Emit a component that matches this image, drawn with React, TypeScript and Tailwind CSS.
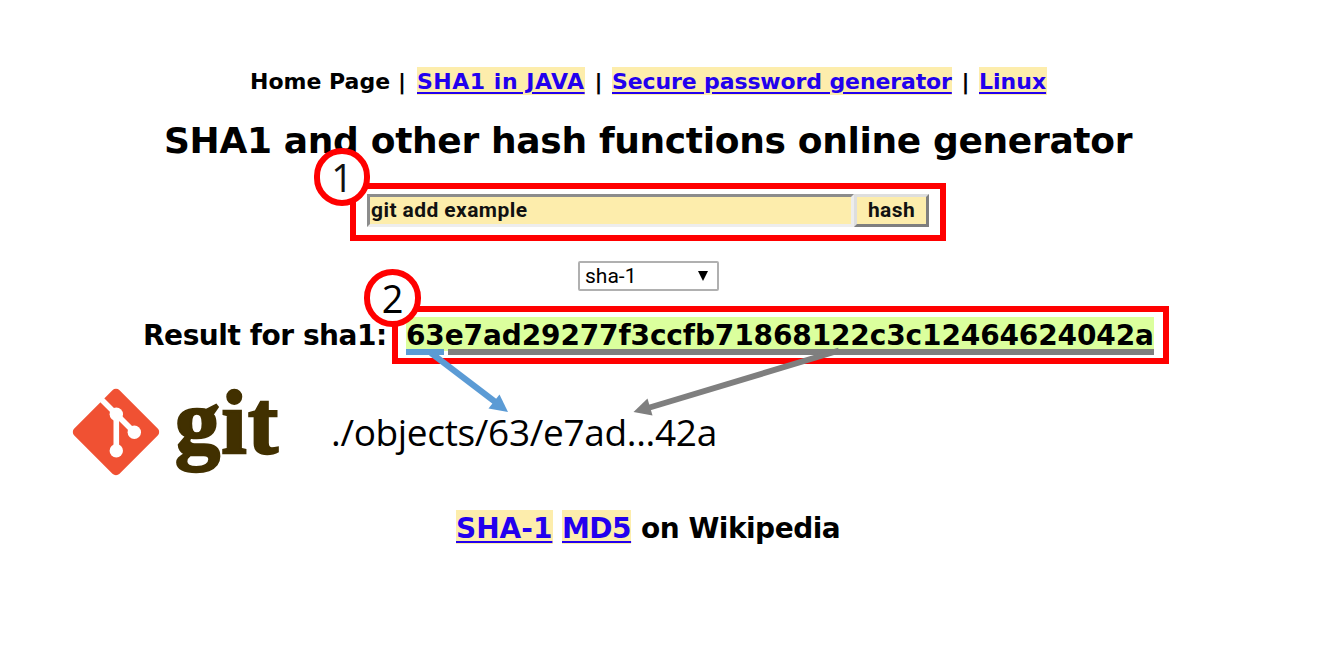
import type { ReactNode } from 'react';

function Mark({ children, className = '' }: { children: ReactNode; className?: string }) {
  return (
    <a href="#" className={`bg-[#fdedac] text-[#2200ee] underline decoration-2 underline-offset-[3px] ${className}`}>
      {children}
    </a>
  );
}

function Step({ n, className }: { n: number; className: string }) {
  return (
    <div
      className={`absolute z-10 flex h-[58px] items-center justify-center rounded-full border-6 border-[#ff0000] bg-white font-['Open_Sans','Noto_Sans',sans-serif] text-[38px] leading-none font-normal ${className}`}
    >
      {n}
    </div>
  );
}

function GitMark() {
  return (
    <svg viewBox="0 0 88 88" className="h-[88px] w-[88px] shrink-0">
      <rect x="12" y="12" width="64" height="64" rx="5" fill="#f05133" transform="rotate(45 44 44)" />
      <path d="M27 9 L62.300 44.300 M44.300 27 V63" fill="none" stroke="#fff" strokeWidth="5.6" />
      <circle cx="44.300" cy="26.300" r="6.700" fill="#fff" />
      <circle cx="62.300" cy="44.300" r="6.700" fill="#fff" />
      <circle cx="44.300" cy="62.700" r="6.700" fill="#fff" />
    </svg>
  );
}

function Arrows() {
  return (
    <svg viewBox="0 0 1326 649" className="pointer-events-none absolute top-0 left-0 z-20 h-[649px] w-[1326px]">
      <path d="M431 353 L498 404" stroke="#5b9bd5" strokeWidth="6" />
      <path d="M508 412 L488.500 408.500 L499.500 394.500 Z" fill="#5b9bd5" />
      <path d="M839 350.500 L648 408" stroke="#7f7f7f" strokeWidth="6" />
      <path d="M633.500 412 L647.500 398.500 L652.500 415.500 Z" fill="#7f7f7f" />
    </svg>
  );
}

export default function App() {
  return (
    <div className="relative h-[649px] w-[1326px] overflow-hidden bg-white font-['DejaVu_Sans',sans-serif] font-bold text-black">
      <nav className="mt-[67px] ml-[250px] flex h-[28px] items-center text-[22px] leading-[29px] whitespace-pre">
        <span className="w-[148px]">Home Page</span>
        <span className="w-[19px]">|</span>
        <Mark className="h-[28px] w-[168px] tracking-[0.52px]">SHA1 in JAVA</Mark>
        <span className="w-[27px] text-center">|</span>
        <Mark className="h-[28px] w-[340px] tracking-[-0.12px]">Secure password generator</Mark>
        <span className="w-[27px] text-center">|</span>
        <Mark className="h-[28px] w-[68px]">Linux</Mark>
      </nav>

      <h1 className="mt-[21px] ml-[164px] h-[50px] text-[36px] leading-[50px] tracking-[-0.33px] whitespace-nowrap">
        SHA1 and other hash functions online generator
      </h1>

      <form className="relative mt-[17px] ml-[350px] flex h-[58px] w-[596px] items-start border-6 border-[#ff0000] pt-[5px] pl-[11px] font-['Roboto',sans-serif] text-[21px] tracking-[0.42px] text-[#111]">
        <Step n={1} className="-top-[41px] -left-[42px] w-[56px] tracking-normal" />
        <div className="flex h-[33px] w-[487px] items-center border-[3px] border-t-[#8c8c8c] border-r-[#ededed] border-b-[#ededed] border-l-[#8c8c8c] bg-[#fdedac] pl-[1px] whitespace-nowrap">
          git add example
        </div>
        <button
          type="button"
          className="flex h-[33px] w-[75px] items-center justify-center border-[3px] border-t-[#dedede] border-r-[#7f7f7f] border-b-[#7f7f7f] border-l-[#dedede] bg-[#fdedac]"
        >
          hash
        </button>
      </form>

      <div className="mt-[20px] ml-[578px] flex h-[30px] w-[141px] items-center justify-between rounded-[2px] border-2 border-[#b0b0b0] pr-[9px] pl-[5px] font-['Roboto',sans-serif] text-[21px] font-normal">
        <span className="pt-px">sha-1</span>
        <svg viewBox="0 0 10 10" className="h-[10px] w-[10px]">
          <path d="M0 0 H10 L5 10 Z" />
        </svg>
      </div>

      <div className="mt-[15px] ml-[143px] flex h-[58px] items-center text-[28px] leading-[36px] whitespace-nowrap">
        <span className="w-[249px] pt-[2px] tracking-[-0.45px]">Result for sha1:</span>
        <div className="relative h-[58px] w-[777px] border-6 border-[#ff0000] pt-[5px] pl-[8px]">
          <Step n={2} className="-top-[43px] -left-[34px] w-[57px]" />
          <div className="h-[34px] w-[748px] bg-[#dbff9d] leading-[38px] tracking-[-0.12px]">
            63e7ad29277f3ccfb71868122c3c12464624042a
          </div>
          <div className="relative -mt-[2px] flex items-start gap-[4px]">
            <div className="h-[6px] w-[38px] bg-[#5b9bd5]" />
            <div className="h-[6px] w-[706px] bg-[#7f7f7f]" />
          </div>
        </div>
      </div>

      <section className="mt-[24px] ml-[72px] flex h-[88px] items-center">
        <GitMark />
        <span className="mb-[18px] ml-[15px] w-[156px] font-['Liberation_Serif',serif] text-[90px] leading-[88px] tracking-[1.5px] text-[#413000] [-webkit-text-stroke:2.5px_#413000]">
          git
        </span>
        <span className="font-['Open_Sans','Noto_Sans',sans-serif] text-[37px] leading-[50px] font-normal tracking-[-0.33px] whitespace-nowrap">
          ./objects/63/e7ad...42a
        </span>
      </section>

      <div className="mt-[34px] ml-[456px] flex h-[34px] items-center text-[28px] leading-[37px] whitespace-nowrap">
        <Mark className="h-[34px] w-[97px]">SHA-1</Mark>
        <Mark className="ml-[9px] h-[34px] w-[69px] tracking-[-0.5px]">MD5</Mark>
        <span className="ml-[10px] h-[34px] tracking-[-0.5px]">on Wikipedia</span>
      </div>

      <Arrows />
    </div>
  );
}
